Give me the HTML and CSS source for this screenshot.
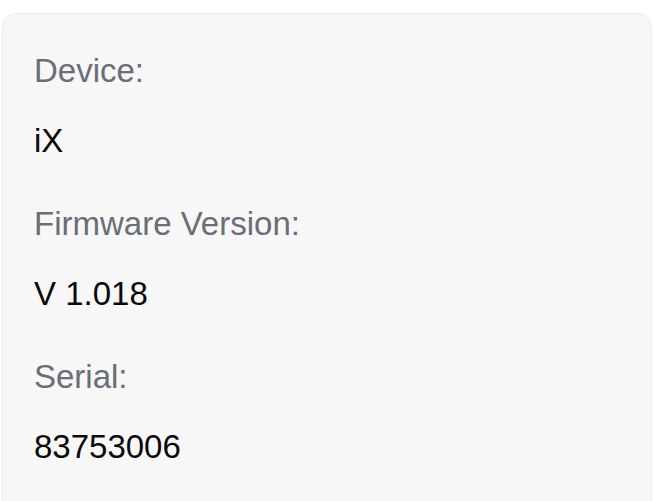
FILE: index.html
```html
<!DOCTYPE html>
<html>
<head>
<meta charset="utf-8">
<link rel="stylesheet" href="styles.css">
</head>
<body>
<div class="card">
  <dl class="info">
    <dt class="label">Device:</dt>
    <dd class="value">iX</dd>
    <dt class="label">Firmware Version:</dt>
    <dd class="value">V 1.018</dd>
    <dt class="label">Serial:</dt>
    <dd class="value">83753006</dd>
  </dl>
</div>
</body>
</html>
```
FILE: styles.css
```css
html, body {
  margin: 0;
  padding: 0;
  background: #ffffff;
  overflow: hidden;
}
body {
  font-family: "Liberation Sans", Arial, Helvetica, sans-serif;
  padding: 13px 1px 0 2px;
}
.card {
  background: #f7f7f8;
  border: 1px solid #eeebec;
  border-radius: 14px 14px 0 0;
  height: 491px;
  padding: 37px 0 0 31px;
  box-sizing: border-box;
}
.info {
  margin: 0;
}
.label {
  font-size: 33px;
  line-height: 40px;
  color: #6a6e75;
  margin: 0 0 30px 0;
}
.value {
  font-size: 33px;
  line-height: 40px;
  color: #0a0a0a;
  margin: 0 0 43px 0;
}
```
